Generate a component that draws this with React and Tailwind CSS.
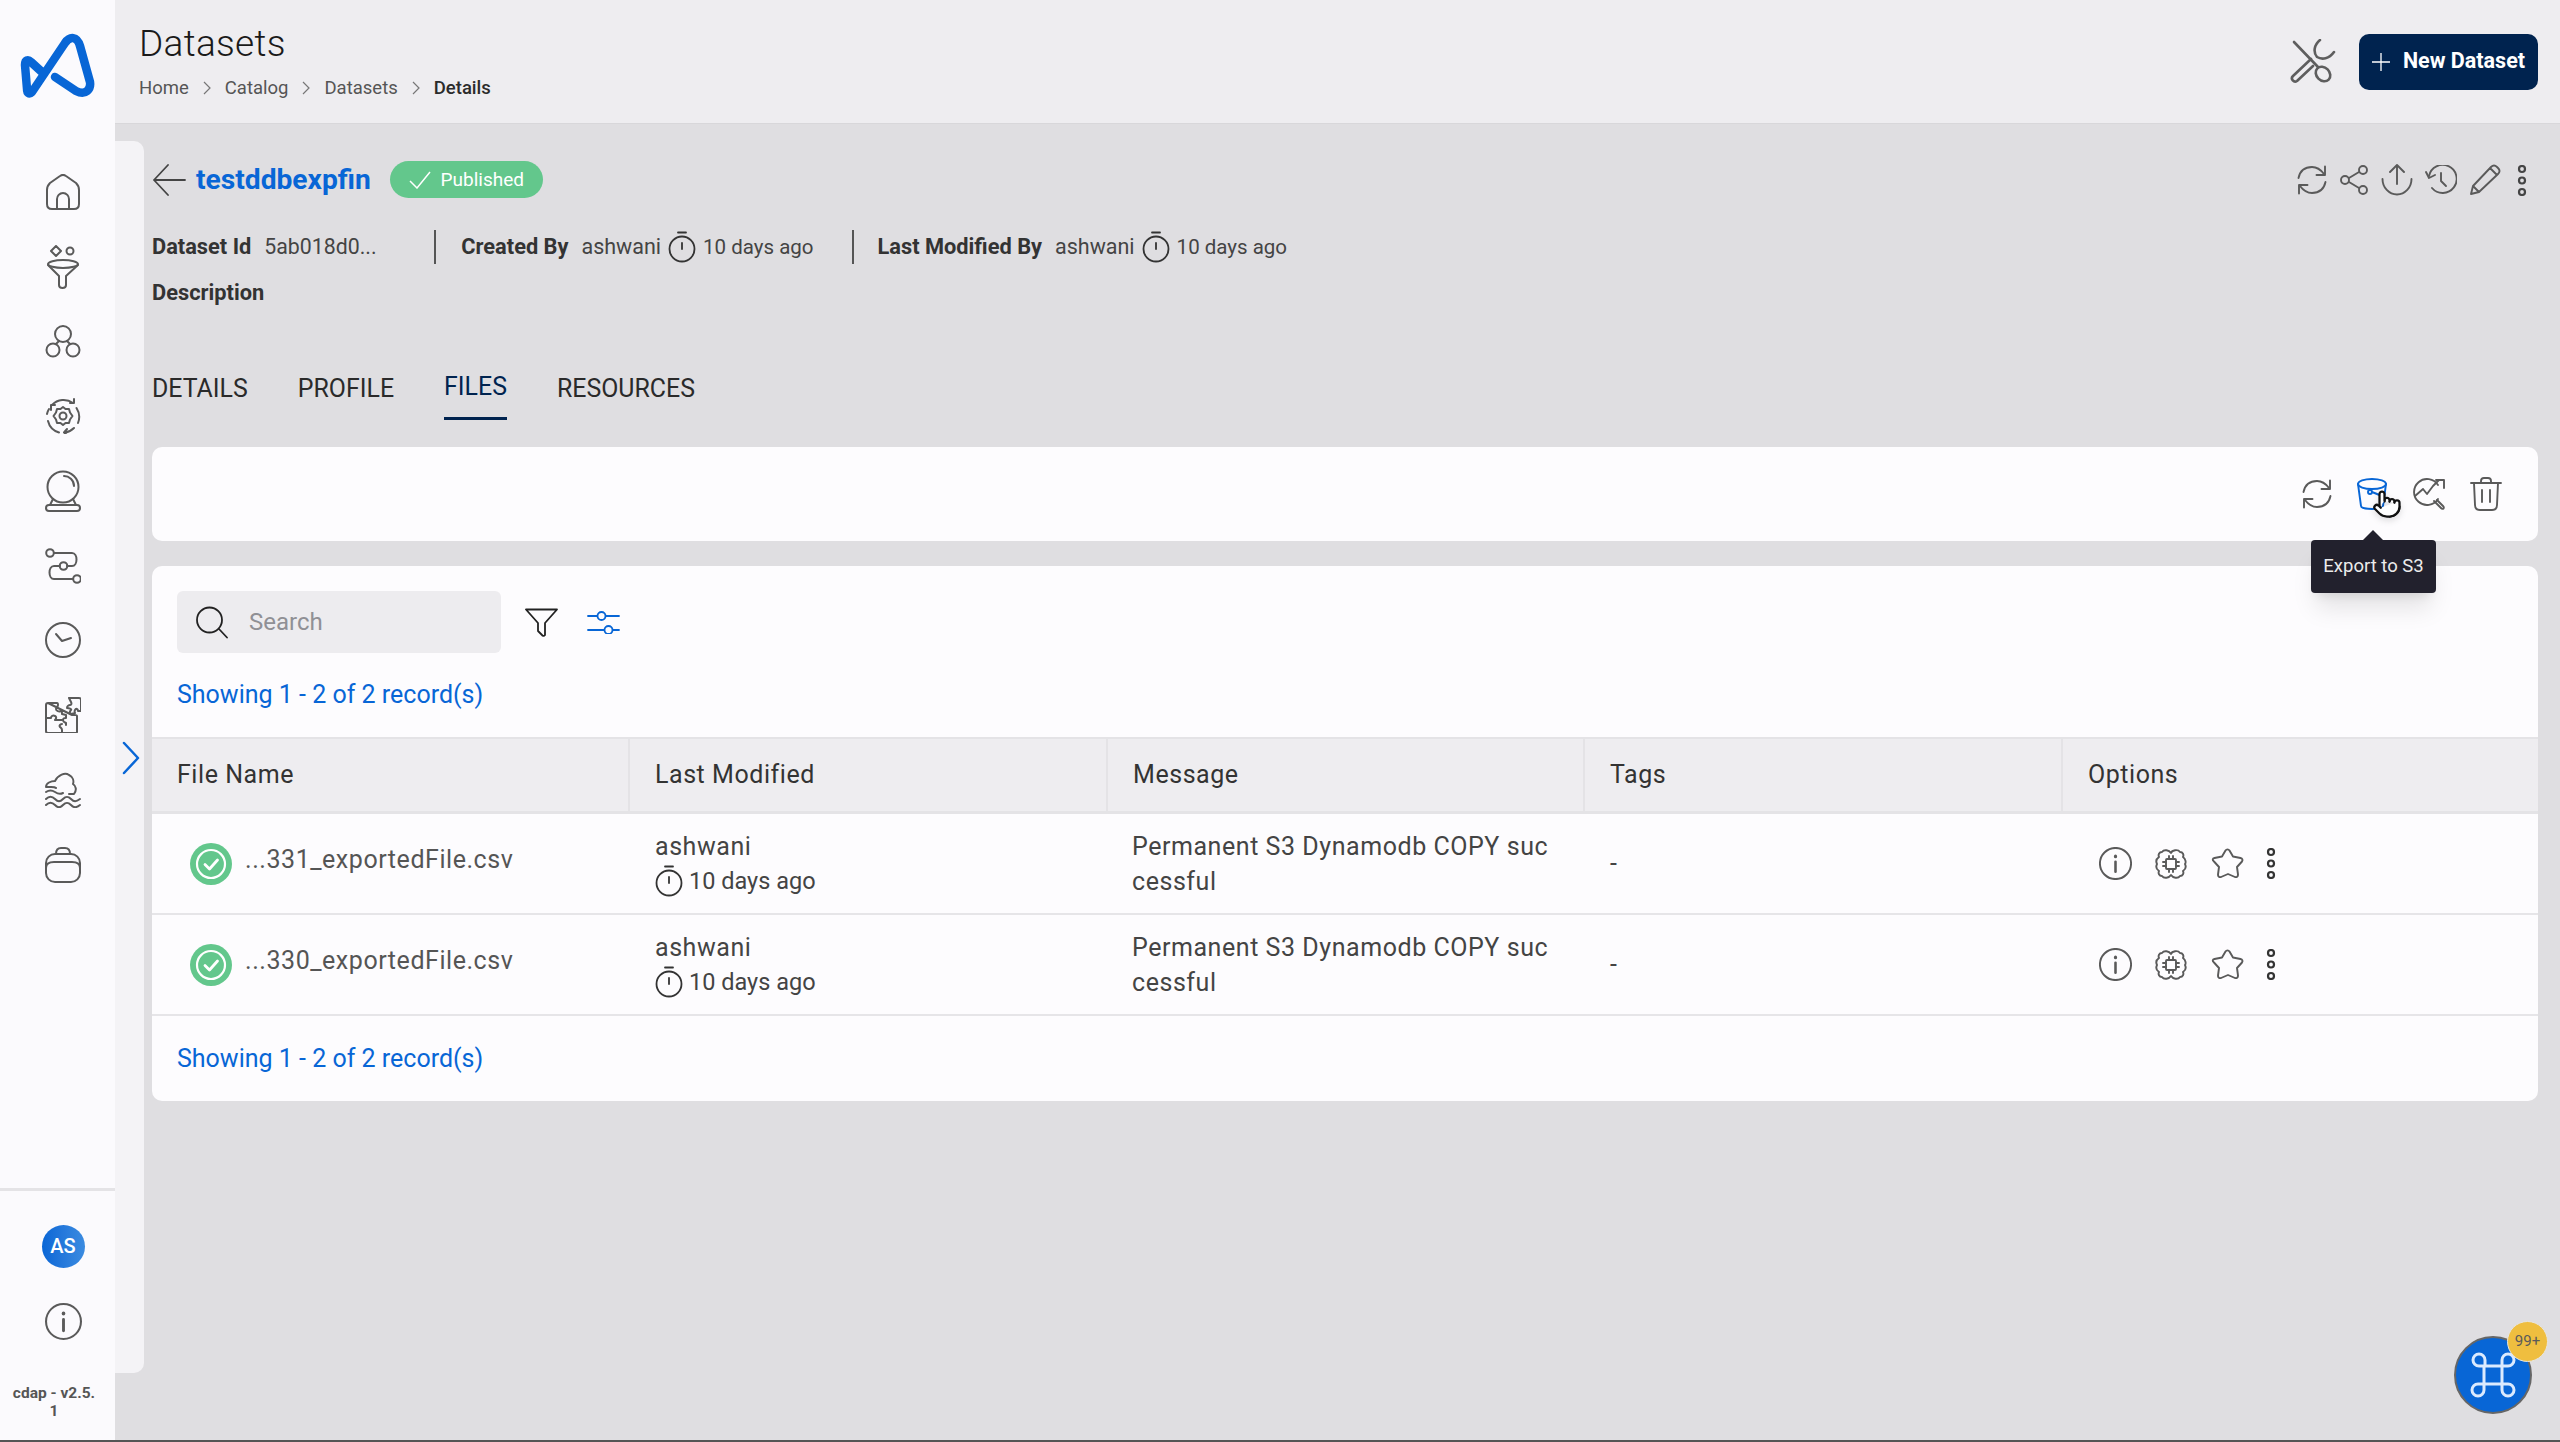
import React from "react";
import { Pointer } from "lucide-react";

const S = ({ w = 36, h = 36, vb = "0 0 36 36", c = "#5a5a5a", sw = 2, className = "", children }) => (
  <svg width={w} height={h} viewBox={vb} fill="none" stroke={c} strokeWidth={sw} strokeLinecap="round" strokeLinejoin="round" className={className}>
    {children}
  </svg>
);

const Logo = () => (
  <svg width="76" height="66" viewBox="0 0 76 66" fill="none" stroke="#0866d6" strokeWidth="8.500" strokeLinecap="round" strokeLinejoin="round">
    <path d="M35 44 L56 58 C66 63 71 56 70 49 L60 13 C57 3 50 3 45 10 L12 59 C9 62 7 60 7 56 L5 32 C5 27 8 26 11 29 L23 40" />
  </svg>
);
const Home = () => (
  <S><path d="M2 16c0-3 1-5 3-7l10-7c2-1.500 4-1.500 6 0l10 7c2 2 3 4 3 7v14c0 3-1.500 5-5 5H7c-3.500 0-5-2-5-5Z" /><path d="M12 35V25c0-3 2.500-6 6-6s6 3 6 6v10" /></S>
);
const Funnel2 = () => (
  <S h={44} vb="0 0 36 44"><path d="M11 1l5 5-5 5-5-5Z" /><circle cx="25" cy="6" r="3.500" /><ellipse cx="18" cy="19" rx="15" ry="4" /><path d="M3 20l11 11v9c0 4 7 4 7 0v-9l12-11" /></S>
);
const Net = () => (
  <S><circle cx="18" cy="10" r="8" /><circle cx="8" cy="26" r="6.500" /><circle cx="28" cy="26" r="6.500" /><path d="M14 17l-3 3M22 17l3 3" /></S>
);
const GearCycle = () => (
  <S vb="0 0 36 36">
    <path d="M7 7A16 16 0 0 1 28 5M31.500 10A16.500 16.500 0 0 1 33 25M29 30a16 16 0 0 1-9 4.500M14 34.500A16 16 0 0 1 3 23M2 16A16 16 0 0 1 4 11" />
    <path d="M29 1v4h-4M6 12V7h4M22 31l-3 3.500 3 2.500" />
    <path d="M18 9l2.500 2h3.500l1 3.500 2.500 3.500-2.500 3.500-1 3.500h-3.500L18 27l-2.500-2H12l-1-3.500L8.500 18l2.500-3.500L12 11h3.500Z" />
    <circle cx="18" cy="18" r="3.500" />
  </S>
);
const Ball = () => (
  <S h={44} vb="0 0 36 44"><circle cx="18" cy="18" r="15.500" /><path d="M19 7c5 0 10 4 10 10" /><path d="M8 30l-3 6M28 30l3 6" /><rect x="1" y="36" width="34" height="6" rx="3" /></S>
);
const RouteI = () => (
  <S><circle cx="5" cy="5" r="3.800" /><circle cx="18.500" cy="18" r="3.800" /><circle cx="32" cy="31" r="3.800" /><path d="M9 5h18c6 0 6 13 0 13h-5M15 18H9c-6 0-6 13 0 13h19" /></S>
);
const Clock = () => (
  <S><circle cx="18" cy="18" r="17" /><path d="M11 12l6 7 9-3" /></S>
);
const Puzzle = () => (
  <S>
    <path d="M3 6h9c1 0 1 1 1 2 0 2-2 2-2 4s3 3 5 2c1 0 1 2 1 3l4 1v3c-2 0-3 0-3 2s1 2 3 3v2M27 18h2c1 0 3 0 3 1v16c0 1-1 1-2 1H3c-1 0-2-1-2-2V8c0-1 1-2 2-2Z" />
    <path d="M1 21h5c0-2 2-3 4-2s1 3 0 4h7M17 27c-2 0-3 2-2 3s2 1 2 3v3" />
    <path d="M24 1h10c1 0 2 1 2 2v11h-3c0-2-2-3-3-1s0 2 0 3l-4 1c-2-1-1-3 0-4s-2-2-4-2c0-2 2-3 3-3s2-1 1-3Z" />
  </S>
);
const Fog = () => (
  <S>
    <path d="M1 15c0-4 5-6 9-6 3-6 10-9 14-6 4 2 5 6 4 9 3 2 4 6 1 10h-5M1 15h5c2 0 4 0 5 1" />
    <path d="M1 20c3-2 6-2 9 0s6 2 8 1M1 27c3-3 6-3 9 0s5 3 8 0 5-3 8 0 5 3 9 0M1 33c3-3 6-3 9 0s5 3 8 0 5-3 8 0 5 3 9 0" />
  </S>
);
const Bag = () => (
  <S>
    <rect x="1" y="7" width="34" height="28" rx="9" />
    <path d="M11 7c0-4 2-6 5-6h4c3 0 5 2 5 6M1 21c0-4 3-6 8-6h18c5 0 8 2 8 6" />
  </S>
);
const Info = ({ s = 36, c = "#5a5a5a", sw = 2 }) => (
  <S w={s} h={s} c={c} sw={sw}><circle cx="18" cy="18" r="17" /><path d="M18 16v11" strokeWidth="2.800" /><path d="M18 10v.5" strokeWidth="3.500" /></S>
);
const Tools = () => (
  <svg width="46" height="46" viewBox="0 0 46 46" fill="none" stroke="#5e5e5e" strokeWidth="2.600" strokeLinecap="round" strokeLinejoin="round">
    <path d="M4 3l24 25" /><path d="M30 1c-6 5-7 12-3 17 5 3 12 2 17-5" /><path d="M21 20L3 37c-3 3 1 7 4 5l16-15" /><ellipse cx="33" cy="35" rx="6.500" ry="8" transform="rotate(-45 33 35)" />
  </svg>
);
const Refresh = ({ s = 30 }) => (
  <S w={s} h={s} vb="0 0 30 30" sw="1.900">
    <path d="M1.500 13C3 6 8 2 15 2c5 0 9 3 12 7M28.500 17C27 24 22 28 15 28c-5 0-9-3-12-7" />
    <path d="M28 1.500V10h-8.500M2 28.500V20h8.500" />
  </S>
);
const Share = () => (
  <S w={30} h={30} vb="0 0 30 30" sw="1.900"><circle cx="6" cy="15" r="4" /><circle cx="24" cy="5" r="4" /><circle cx="24" cy="25" r="4" /><path d="M10 13l10-6M10 17l10 6" /></S>
);
const Upload = () => (
  <S w={32} h={32} vb="0 0 32 32" sw="1.900"><path d="M9 8l7-7 7 7M16 1v19" /><path d="M1.500 15a14.500 15.500 0 0 0 29 0" /></S>
);
const History = () => (
  <S w={32} h={30} vb="0 0 32 30" sw="1.900"><path d="M4 11A14 14 0 1 1 7 23" /><path d="M1 7l3 6 6-3" /><path d="M16 8v8l5 5" /></S>
);
const Pencil = () => (
  <S w={32} h={32} vb="0 0 32 32" sw="1.900"><path d="M2 30l2-8L22 3c2-2 4-2 6 0l1 1c2 2 2 4 0 6L10 28ZM4 22l6 6M21 4l7 7" /></S>
);
const Dots = ({ c = "#444" }) => (
  <S w={10} h={31} vb="0 0 10 31" c={c} sw="2.200"><circle cx="5" cy="4" r="3" /><circle cx="5" cy="15.500" r="3" /><circle cx="5" cy="27" r="3" /></S>
);
const TimerI = () => (
  <S w={28} h={32} vb="0 0 28 32" c="#333" sw="1.800"><path d="M10 1.500h8" /><circle cx="14" cy="18" r="12.500" /><path d="M14 12v6" /></S>
);
const Bucket = () => (
  <S w={32} h={32} vb="0 0 32 32" c="#0866d6" sw="1.900"><ellipse cx="16" cy="6" rx="14" ry="5" /><path d="M2 6l3 22c0 2 6 3 11 3s11-1 11-3l3-22" /><circle cx="14" cy="14" r="2" /><path d="M16 14l10 4" /></S>
);
const Analytics = () => (
  <S w={34} h={34} vb="0 0 34 34" sw="1.900"><path d="M26 8a13 13 0 1 0 0 14" /><path d="M22 24l7 7c2 2 4 0 2-2l-6-6" /><path d="M3 19l8-7 4 5 6-8 6-6" /><path d="M24 3h8v8" /></S>
);
const Trash = () => (
  <S w={32} h={34} vb="0 0 32 34" sw="1.900"><path d="M1 6h30" /><path d="M11 6V4c0-2 1-3 3-3h4c2 0 3 1 3 3v2" /><path d="M4 6l1 22c0 3 2 5 5 5h12c3 0 5-2 5-5l1-22" /><path d="M12 13v12M20 13v12" /></S>
);
const SearchI = () => (
  <S w={33} h={33} vb="0 0 33 33" c="#222" sw="1.800"><circle cx="14.500" cy="14" r="12.500" /><path d="M24 23l8 8.500" /></S>
);
const FilterI = () => (
  <S w={33} h={29} vb="0 0 33 29" c="#222" sw="1.800"><path d="M1 1.500h31L20 15v12c-1 1.500-2.500 1-3 0l-4-4v-8Z" /></S>
);
const Sliders = () => (
  <S w={33} h={24} vb="0 0 33 24" c="#0866d6" sw="1.800"><path d="M1 6h9M19 6h13M1 20h16M26 20h6" /><circle cx="14.500" cy="6" r="4" /><circle cx="21.500" cy="20" r="4" /></S>
);
const Brain = () => (
  <svg width="32" height="32" viewBox="0 0 32 32" fill="none" stroke="#5a5a5a" strokeWidth="1.900" strokeLinecap="round" strokeLinejoin="round">
    <path d="M16 5c1-3 7-4 9-1 3 0 4 3 3 5 3 2 3 6 2 7 1 2 1 5-2 7 1 2 0 5-3 5-2 3-7 2-9-1-2 3-7 4-9 1-3 0-4-3-3-5-3-2-3-5-2-7-1-2-1-5 2-7-1-2 0-5 3-5 2-3 7-2 9 1Z" />
    <rect x="11" y="11" width="10" height="10" rx="1" />
    <path d="M14 8v3M18 8v3M14 21v3M18 21v3M8 14h3M8 18h3M21 14h3M21 18h3" />
  </svg>
);
const StarI = () => (
  <S w={33} h={32} vb="0 0 33 32" sw="1.900"><path d="M14.500 2.500c1-1.500 3-1.500 4 0l3.500 6 7.500 1.500c2 .5 2.500 2 1.500 3.500l-5 5.500 1 7.500c.2 2-1.500 3-3 2.500l-7-3-7 3c-1.500.5-3.200-.5-3-2.500l1-7.500-5-5.500C1 12 1.500 10.500 3.500 10l7.500-1.500Z" /></S>
);
const CheckBadge = () => (
  <div className="flex h-[42px] w-[42px] items-center justify-center rounded-full bg-[#63c78c]">
    <svg width="32" height="32" viewBox="0 0 32 32" fill="none" stroke="#fff" strokeWidth="2.200" strokeLinecap="round" strokeLinejoin="round">
      <circle cx="16" cy="16" r="14" /><path d="M10 16.500l4.500 4.500 8-9" strokeWidth="2.800" />
    </svg>
  </div>
);

const navIcons = [Home, Funnel2, Net, GearCycle, Ball, RouteI, Clock, Puzzle, Fog, Bag];

const Sidebar = () => (
  <aside className="z-10 flex h-full w-[115px] shrink-0 flex-col bg-[#fbfafd]">
    <div className="flex h-[155px] justify-center pt-[33px] pl-[1px]"><Logo /></div>
    <nav className="flex flex-col">
      {navIcons.map((I, i) => (
        <div key={i} className="flex h-[74.700px] items-center justify-center pl-[11px]"><I /></div>
      ))}
    </nav>
    <div className="mt-[286px] border-t-[3px] border-[#e4e3e6]" />
    <div className="flex flex-col items-center pl-[11px]">
      <div className="mt-[34px] flex h-[43px] w-[43px] items-center justify-center rounded-full bg-gradient-to-r from-[#0866d6] to-[#3b8be0] text-[20px] font-medium text-white">AS</div>
      <div className="mt-[35px] flex"><Info s={37} /></div>
    </div>
    <div className="mt-[44px] w-[108px] text-center text-[15.500px] leading-[18px] font-bold text-[#555]">cdap - v2.5.<br />1</div>
  </aside>
);

const Crumb = () => (
  <svg width="10" height="14" viewBox="0 0 10 14" fill="none" stroke="#777" strokeWidth="1.200" className="mx-[13px]"><path d="M2 1l6 6-6 6" /></svg>
);

const Header = () => (
  <header className="flex h-[124px] shrink-0 items-center justify-between border-b border-[#d8d7da] bg-[#eeedf0] pr-[22px] pl-[24px]">
    <div className="flex flex-col">
      <h1 className="mt-[-2px] text-[37px] leading-[44px] font-light tracking-[0.3px] text-[#1a1a1a]">Datasets</h1>
      <div className="mt-[11px] flex items-center text-[18.500px] leading-[22px] text-[#555]">
        <span>Home</span><Crumb /><span>Catalog</span><Crumb /><span>Datasets</span><Crumb /><span className="font-medium text-[#2b2b2b]">Details</span>
      </div>
    </div>
    <div className="flex items-center gap-[23px]">
      <Tools />
      <button className="flex h-[56px] w-[179px] items-center justify-center gap-[13px] rounded-[10px] bg-[#00234f] text-[21.500px] font-bold text-white">
        <svg width="18" height="18" viewBox="0 0 18 18" stroke="#fff" strokeWidth="1.300"><path d="M9 0v18M0 9h18" /></svg>
        New Dataset
      </button>
    </div>
  </header>
);

const Meta = ({ children, className = "" }) => <span className={`w-fit text-[21.800px] font-bold text-[#333] ${className}`}>{children}</span>;

const TitleRow = () => (
  <div className="flex h-[50px] items-center justify-between">
    <div className="flex items-center">
      <svg width="34" height="32" viewBox="0 0 34 32" fill="none" stroke="#444" strokeWidth="1.800" strokeLinecap="round" strokeLinejoin="round"><path d="M16 1L2 16l14 15M2 16h31" /></svg>
      <h2 className="ml-[10px] text-[28.200px] font-bold text-[#0866d6]">testddbexpfin</h2>
      <div className="ml-[19px] flex h-[37px] w-[153px] items-center justify-center gap-[10px] rounded-full bg-[#63c78c] text-[19px] text-white">
        <svg width="22" height="18" viewBox="0 0 22 18" fill="none" stroke="#fff" strokeWidth="1.500"><path d="M1 10l7 7L21 1" /></svg>
        Published
      </div>
    </div>
    <div className="flex items-center gap-[12px] pr-[11px]">
      <Refresh /><Share /><Upload /><History /><Pencil /><span className="ml-[4px] flex"><Dots /></span>
    </div>
  </div>
);

const MetaRow = () => (
  <div className="mt-[25px] flex h-[34px] items-center text-[21.500px] text-[#444]">
    <Meta>Dataset Id</Meta><span className="ml-[13px] w-[170px] shrink-0 text-[21.300px]">5ab018d0...</span>
    <div className="h-[34px] w-[2px] bg-[#555]" />
    <Meta className="ml-[25px]">Created By</Meta><span className="ml-[13px]">ashwani</span>
    <span className="ml-[7px] flex"><TimerI /></span><span className="ml-[7px] text-[20.500px]">10 days ago</span>
    <div className="ml-[38px] h-[34px] w-[2px] bg-[#555]" />
    <Meta className="ml-[24px]">Last Modified By</Meta><span className="ml-[13px]">ashwani</span>
    <span className="ml-[7px] flex"><TimerI /></span><span className="ml-[7px] text-[20.500px]">10 days ago</span>
  </div>
);

const Tabs = () => (
  <div className="mt-[51px] mb-[22px] flex h-[64px] gap-[50px] text-[24.900px] text-[#2a2a2a]">
    <span className="pt-[9px]">DETAILS</span>
    <span className="pt-[9px]">PROFILE</span>
    <span className="h-[59px] border-b-[3px] border-[#00234f] pt-[7px] text-[#00234f]">FILES</span>
    <span className="pt-[9px]">RESOURCES</span>
  </div>
);

const Toolbar = () => (
  <div className="relative flex h-[94px] items-center justify-end gap-[24px] rounded-[10px] bg-[#fdfcfe] pr-[36px]">
    <Refresh /><Bucket /><Analytics /><Trash />
    <Pointer size={30} fill="#fff" stroke="#111" strokeWidth={1.800} className="absolute top-[42px] right-[136px] drop-shadow-md" />
    <div className="absolute top-[93px] right-[102px] z-20 flex h-[53px] w-[125px] items-center justify-center rounded-[4px] bg-[#22212d] text-[18.500px] text-[#ececec] shadow-xl">
      <span className="absolute top-[-10px] left-[52px] h-0 w-0 border-x-[10px] border-b-[10px] border-x-transparent border-b-[#22212d]" />
      Export to S3
    </div>
  </div>
);

const cols = "grid grid-cols-[478px_478px_477px_478px_1fr]";
const rows = [
  "...331_exportedFile.csv",
  "...330_exportedFile.csv",
];
const Row = ({ name }) => (
  <div className={`${cols} h-[101px] items-center border-b-2 border-[#e6e5e8] text-[25px] leading-[35px] tracking-[0.55px] text-[#444]`}>
    <div className="flex items-center pl-[38px]">
      <CheckBadge />
      <span className="mt-[-9px] ml-[13px] text-[#555]">{name}</span>
    </div>
    <div className="pl-[25px]">
      <div>ashwani</div>
      <div className="flex items-center gap-[6px] text-[23.500px] tracking-normal"><TimerI />10 days ago</div>
    </div>
    <div className="pl-[24px]">Permanent S3 Dynamodb COPY suc<br />cessful</div>
    <div className="pl-[25px]">-</div>
    <div className="flex items-center pl-[36px]">
      <Info s={33} sw="2.100" />
      <span className="ml-[23px] flex"><Brain /></span>
      <span className="ml-[24px] flex"><StarI /></span>
      <span className="ml-[22px] flex"><Dots c="#333" /></span>
    </div>
  </div>
);

const Table = () => (
  <div className="mt-[25px] rounded-[10px] bg-[#fdfcfe]">
    <div className="flex items-center px-[25px] pt-[25px]">
      <div className="flex h-[62px] w-[324px] items-center rounded-[6px] bg-[#edecef] pl-[18px]">
        <SearchI /><span className="ml-[21px] text-[24px] text-[#909095]">Search</span>
      </div>
      <span className="ml-[24px] flex"><FilterI /></span>
      <span className="ml-[29px] flex"><Sliders /></span>
    </div>
    <div className="mt-[26px] px-[25px] text-[25px] leading-[32px] text-[#0866d6]">Showing 1 - 2 of 2 record(s)</div>
    <div className={`${cols} mt-[26px] h-[77px] border-y-[2px] border-b-[3px] border-[#e4e3e6] bg-[#eeedf0] text-[25px] font-[450] tracking-[0.55px] text-[#333]`}>
      {["File Name", "Last Modified", "Message", "Tags", "Options"].map((t, i) => (
        <div key={t} className={`flex items-center pl-[25px] ${i < 4 ? "border-r-2 border-[#e4e3e6]" : ""}`}>{t}</div>
      ))}
    </div>
    {rows.map((n) => <Row key={n} name={n} />)}
    <div className="flex h-[85px] items-center px-[25px] text-[25px] text-[#0866d6]">Showing 1 - 2 of 2 record(s)</div>
  </div>
);

export default function App() {
  return (
    <div className="relative flex h-[1442px] w-[2560px] overflow-hidden border-b-2 border-[#555] bg-[#dfdee1] font-['Roboto',sans-serif]">
      <Sidebar />
      <main className="flex min-w-0 flex-1 flex-col">
        <Header />
        <div className="flex flex-1">
          <div className="mt-[17px] mb-[67px] w-[29px] rounded-r-[10px] bg-[#f4f3f6]" />
          <div className="flex-1 pt-[31px] pr-[22px] pl-[8px]">
            <TitleRow />
            <MetaRow />
            <div className="mt-[12px] h-[34px] text-[21.800px] leading-[34px] font-bold text-[#333]">Description</div>
            <Tabs />
            <Toolbar />
            <Table />
          </div>
        </div>
      </main>
      <svg width="18" height="34" viewBox="0 0 18 34" fill="none" stroke="#0866d6" strokeWidth="2.500" strokeLinecap="round" strokeLinejoin="round" className="absolute top-[741px] left-[122px]"><path d="M2 2l14 15L2 32" /></svg>
      <div className="absolute top-[1336px] left-[2454px] flex h-[78px] w-[78px] items-center justify-center rounded-full border-2 border-[#666] bg-[#0866d6]">
        <svg width="46" height="46" viewBox="0 0 46 46" fill="none" stroke="#dbeafe" strokeWidth="3"><path d="M14 14h18v18H14ZM14 14H9a6 6 0 1 1 6-6v6M32 14V8a6 6 0 1 1 6 6h-6M32 32h6a6 6 0 1 1-6 6v-6M14 32v6a6 6 0 1 1-6-6h6" /></svg>
        <div className="absolute top-[-17px] left-[51px] flex h-[41px] w-[41px] items-center justify-center rounded-full border border-[#e8e6e0] bg-[#efbe3f] text-[15px] text-[#5a5a5a]">99+</div>
      </div>
    </div>
  );
}
